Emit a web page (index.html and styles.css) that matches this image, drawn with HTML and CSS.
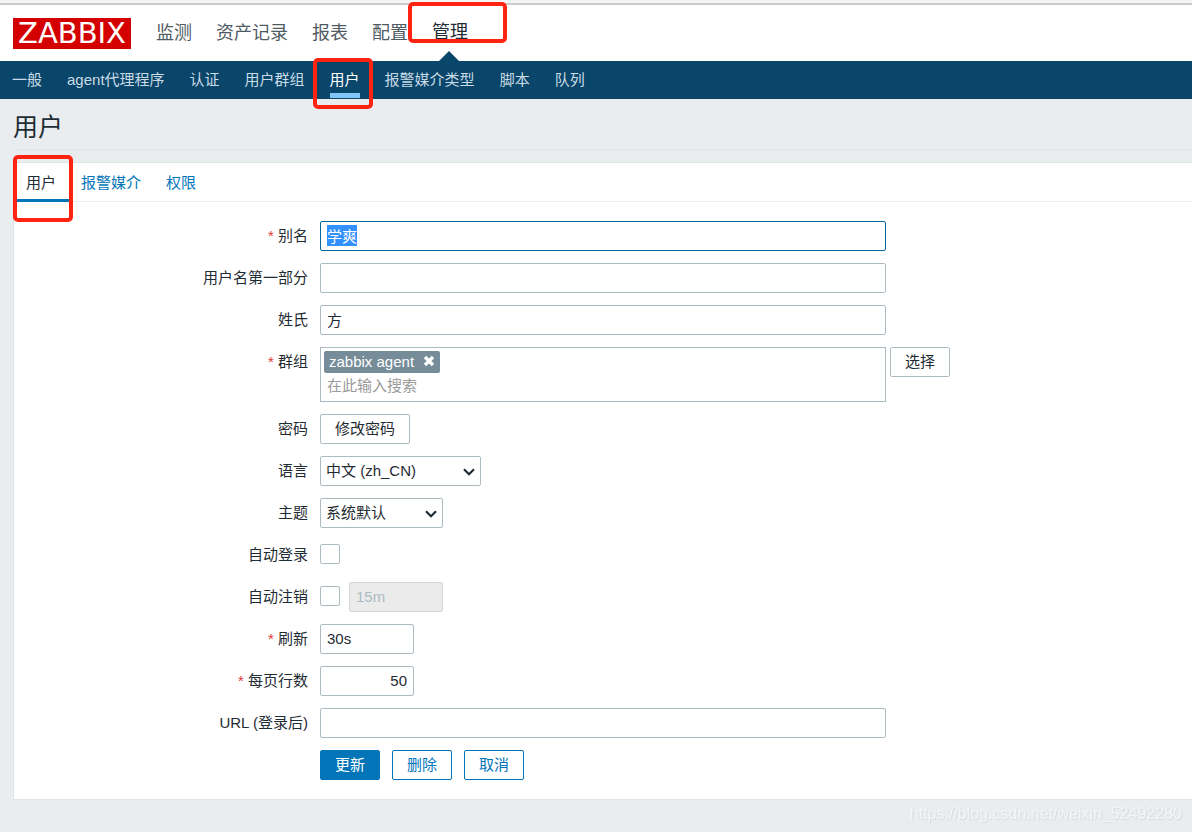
FILE: index.html
```html
<!DOCTYPE html>
<html lang="zh-CN">
<head>
<meta charset="utf-8">
<meta name="viewport" content="width=device-width, initial-scale=1">
<title>用户</title>
<link rel="stylesheet" href="styles.css">
</head>
<body>
<div class="window-edge"></div>
<header class="top">
  <a class="logo" href="#">ZABBIX</a>
  <nav class="main-nav">
    <a href="#">监测</a>
    <a href="#">资产记录</a>
    <a href="#">报表</a>
    <a href="#">配置</a>
    <a class="active" href="#">管理<span class="mark mark-main"></span></a>
  </nav>
</header>
<nav class="sub-nav">
  <a href="#">一般</a>
  <a href="#">agent代理程序</a>
  <a href="#">认证</a>
  <a href="#">用户群组</a>
  <a class="active" href="#">用户<span class="mark mark-sub"></span></a>
  <a href="#">报警媒介类型</a>
  <a href="#">脚本</a>
  <a href="#">队列</a>
</nav>
<main class="content">
  <h1 class="title">用户</h1>
  <section class="panel">
    <nav class="tabs">
      <a class="active" href="#">用户<span class="mark mark-tab"></span></a>
      <a href="#">报警媒介</a>
      <a href="#">权限</a>
    </nav>
    <form class="form">
      <label class="required" for="alias">别名</label>
      <div class="field"><input class="text wide" id="alias" type="text" value="学爽"></div>

      <label for="name">用户名第一部分</label>
      <div class="field"><input class="text wide" id="name" type="text"></div>

      <label for="surname">姓氏</label>
      <div class="field"><input class="text wide" id="surname" type="text" value="方"></div>

      <label class="required" for="groups">群组</label>
      <div class="field group-field">
        <div class="multiselect wide">
          <span class="tag">zabbix agent
            <button class="tag-remove" type="button" aria-label="移除">
              <svg width="12" height="12" viewBox="0 0 12 12"><path d="M2 2l8 8M10 2l-8 8" stroke="#fff" stroke-width="3.4"/></svg>
            </button>
          </span>
          <input class="search" id="groups" type="text" placeholder="在此输入搜索">
        </div>
        <button class="btn plain" type="button">选择</button>
      </div>

      <label for="password">密码</label>
      <div class="field"><button class="btn plain" id="password" type="button">修改密码</button></div>

      <label for="lang">语言</label>
      <div class="field">
        <div class="select select-lang">
          <select id="lang"><option>中文 (zh_CN)</option></select>
          <svg class="chevron" width="12" height="8" viewBox="0 0 12 8"><path d="M1 1.2l5 5 5-5" fill="none" stroke="#1f2c33" stroke-width="2.2"/></svg>
        </div>
      </div>

      <label for="theme">主题</label>
      <div class="field">
        <div class="select select-theme">
          <select id="theme"><option>系统默认</option></select>
          <svg class="chevron" width="12" height="8" viewBox="0 0 12 8"><path d="M1 1.2l5 5 5-5" fill="none" stroke="#1f2c33" stroke-width="2.2"/></svg>
        </div>
      </div>

      <label for="autologin">自动登录</label>
      <div class="field"><input class="check" id="autologin" type="checkbox"></div>

      <label for="autologout">自动注销</label>
      <div class="field logout-field">
        <input class="check" id="autologout" type="checkbox">
        <input class="text small" type="text" value="15m" aria-label="自动注销时间" disabled>
      </div>

      <label class="required" for="refresh">刷新</label>
      <div class="field"><input class="text small" id="refresh" type="text" value="30s"></div>

      <label class="required" for="rows">每页行数</label>
      <div class="field"><input class="text small number" id="rows" type="text" value="50"></div>

      <label for="url">URL (登录后)</label>
      <div class="field"><input class="text wide" id="url" type="text"></div>

      <div class="field actions">
        <button class="btn primary" type="button">更新</button>
        <button class="btn outline" type="button">删除</button>
        <button class="btn outline" type="button">取消</button>
      </div>
    </form>
  </section>
</main>
<div class="watermark">https://blog.csdn.net/weixin_52492280</div>
<script src="script.js"></script>
</body>
</html>
```

FILE: styles.css
```css
* {
  box-sizing: border-box;
}

body {
  margin: 0;
  min-height: 100vh;
  background: #e9edf0;
  color: #1f2c33;
  font: 15px/20px "Liberation Sans", "Noto Sans CJK SC", sans-serif;
}

a {
  text-decoration: none;
}

input,
select,
button {
  font: inherit;
  color: inherit;
}

.window-edge {
  height: 5px;
  background: #f4f4f4;
  border-bottom: 2px solid #cccccc;
}

/* Header */
.top {
  display: flex;
  align-items: center;
  gap: 25px;
  height: 56px;
  padding: 0 13px;
  background: #ffffff;
}

.logo {
  width: 118px;
  height: 31px;
  background: #d40000;
  color: #ffffff;
  font: 29px/31px "DejaVu Sans", sans-serif;
  text-align: center;
}

.main-nav {
  display: flex;
  gap: 24px;
  align-self: stretch;
}

.main-nav a {
  position: relative;
  color: #4f5b63;
  font-size: 18px;
  line-height: 56px;
}

.main-nav .active {
  color: #1f2c33;
  line-height: 54px;
}

.main-nav .active::after {
  content: "";
  position: absolute;
  left: 50%;
  bottom: 0;
  margin-left: -11px;
  border: solid transparent;
  border-width: 0 10px 10px;
  border-bottom-color: #0a466a;
}

.sub-nav {
  display: flex;
  gap: 25px;
  height: 38px;
  padding: 0 12px;
  background: #0a466a;
}

.sub-nav a {
  position: relative;
  color: #c9dbe6;
  line-height: 37px;
}

.sub-nav .active {
  color: #ffffff;
}

.sub-nav .active::after {
  content: "";
  position: absolute;
  left: 0;
  right: 0;
  bottom: 1px;
  height: 5px;
  background: #7fc5f5;
}

/* Hand-drawn highlight frames */
.mark {
  position: absolute;
  z-index: 2;
  border: 4px solid #ff2412;
  border-radius: 5px;
  pointer-events: none;
}

.mark-main {
  inset: -3px -39px 18px -24px;
}

.mark-sub {
  inset: -3px -13px -10px -17px;
}

.mark-tab {
  inset: -8px -4px -23px -1px;
}

/* Page body */
.content {
  padding-left: 13px;
}

.title {
  margin: 0 0 12px;
  height: 51px;
  border-bottom: 1px solid #dfe4e7;
  font-size: 25px;
  font-weight: 400;
  line-height: 56px;
}

.panel {
  background: #ffffff;
  border: 1px solid #dfe4e7;
  border-right: 0;
}

.tabs {
  display: flex;
  height: 39px;
  border-bottom: 1px solid #ebeef0;
}

.tabs a {
  position: relative;
  height: 39px;
  padding: 0 13px 0 12px;
  color: #0275b8;
  line-height: 39px;
}

.tabs .active {
  color: #1f2c33;
  border-bottom: 3px solid #0275b8;
}

.form {
  display: grid;
  grid-template-columns: 1fr 3fr;
  gap: 12px;
  padding: 19px 20px 19px 10px;
}

.form label {
  line-height: 30px;
  text-align: right;
}

.required::before {
  content: "* ";
  color: #e33734;
}

.field {
  display: flex;
  align-items: center;
  min-height: 30px;
}

.group-field {
  align-items: flex-start;
  gap: 4px;
}

.logout-field {
  gap: 9px;
}

.wide {
  width: 566px;
}

.small {
  width: 94px;
}

.text {
  height: 30px;
  padding: 0 6px 2px;
  border: 1px solid #acbbc2;
  border-radius: 2px;
  background: #ffffff;
}

.text:focus {
  outline: 0;
  border-color: #00689c;
}

.text::selection {
  background: #3390ff;
  color: #ffffff;
}

.text:disabled {
  border-color: #ced6da;
  background: #ebebeb;
  color: #acbbc2;
}

.number {
  text-align: right;
}

.multiselect {
  display: flex;
  flex-direction: column;
  align-items: flex-start;
  height: 55px;
  padding: 3px;
  border: 1px solid #acbbc2;
}

.tag {
  display: flex;
  align-items: center;
  gap: 9px;
  height: 22px;
  padding: 0 5px;
  border-radius: 2px;
  background: #768d99;
  color: #ffffff;
}

.tag-remove {
  display: flex;
  padding: 0 0 2px;
  border: 0;
  background: none;
}

.search {
  width: 100%;
  height: 26px;
  padding: 0 3px;
  border: 0;
  outline: 0;
  background: none;
}

.search::placeholder {
  color: #9a9a9a;
}

.btn {
  height: 30px;
  padding: 0 14px;
  border: 1px solid #0275b8;
  border-radius: 2px;
  background: #ffffff;
  line-height: 28px;
}

.plain {
  border-color: #acbbc2;
}

.outline {
  color: #0275b8;
}

.primary {
  background: #0275b8;
  color: #ffffff;
}

.actions {
  grid-column: 2;
  gap: 12px;
}

.select {
  position: relative;
}

.select-lang {
  width: 161px;
}

.select-theme {
  width: 123px;
}

.select select {
  display: block;
  width: 100%;
  height: 30px;
  padding: 0 5px;
  border: 1px solid #acbbc2;
  border-radius: 2px;
  background: #ffffff;
  appearance: none;
}

.chevron {
  position: absolute;
  right: 6px;
  top: 12px;
  pointer-events: none;
}

.check {
  width: 20px;
  height: 20px;
  margin: 0 0 2px;
  border: 1px solid #acbbc2;
  border-radius: 2px;
  background: #ffffff;
  appearance: none;
}

.watermark {
  position: fixed;
  right: 10px;
  bottom: 8px;
  color: #f3f5f6;
  font-size: 16px;
  text-shadow: 1px 1px 1px #d6dadc;
}
```

FILE: script.js
```js
const alias = document.getElementById("alias");
alias.focus();
alias.select();
```
